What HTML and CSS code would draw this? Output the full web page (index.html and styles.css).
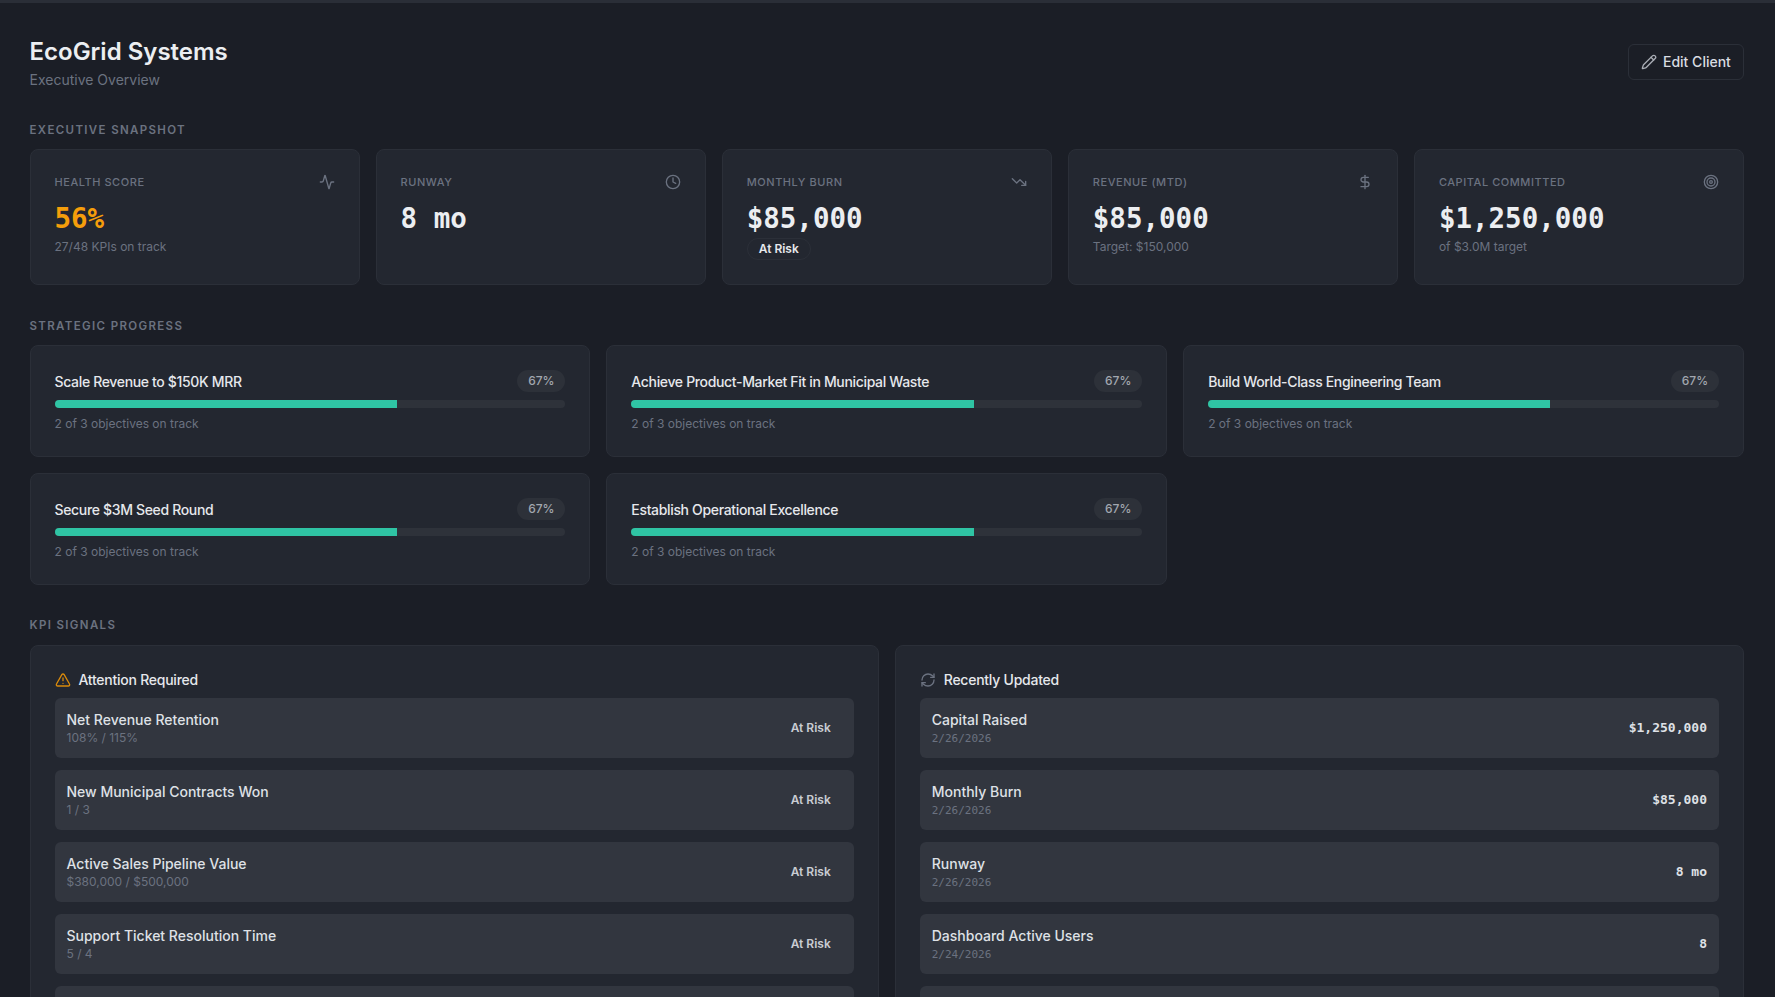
FILE: index.html
```html
<!DOCTYPE html>
<html lang="en">
<head>
<meta charset="utf-8">
<title>EcoGrid Systems</title>
<link rel="stylesheet" href="styles.css">
</head>
<body>
<main class="page">
  <header class="header">
    <div>
      <h1 class="title">EcoGrid Systems</h1>
      <p class="subtitle">Executive Overview</p>
    </div>
    <button class="edit-btn" type="button">
      <svg class="icon icon-edit" viewBox="0 0 24 24"><path d="M21.174 6.812a1 1 0 0 0-3.986-3.987L3.842 16.174a2 2 0 0 0-.5.83l-1.321 4.352a.5.5 0 0 0 .623.622l4.353-1.32a2 2 0 0 0 .83-.497z"/><path d="m15 5 4 4"/></svg>
      Edit Client
    </button>
  </header>

  <section class="section">
    <h2 class="section-label">EXECUTIVE SNAPSHOT</h2>
    <div class="snapshot-grid">
      <article class="card stat">
        <div class="stat-head"><span class="stat-label">HEALTH SCORE</span>
          <svg class="icon" viewBox="0 0 24 24"><path d="M22 12h-2.48a2 2 0 0 0-1.93 1.46l-2.35 8.36a.25.25 0 0 1-.48 0L9.24 2.18a.25.25 0 0 0-.48 0l-2.35 8.36A2 2 0 0 1 4.49 12H2"/></svg></div>
        <div class="stat-value warn">56%</div>
        <div class="stat-sub">27/48 KPIs on track</div>
      </article>
      <article class="card stat">
        <div class="stat-head"><span class="stat-label">RUNWAY</span>
          <svg class="icon" viewBox="0 0 24 24"><circle cx="12" cy="12" r="10"/><polyline points="12 6 12 12 16 14"/></svg></div>
        <div class="stat-value">8 mo</div>
      </article>
      <article class="card stat">
        <div class="stat-head"><span class="stat-label">MONTHLY BURN</span>
          <svg class="icon" viewBox="0 0 24 24"><polyline points="22 17 13.5 8.5 8.5 13.5 2 7"/><polyline points="16 17 22 17 22 11"/></svg></div>
        <div class="stat-value">$85,000</div>
        <span class="badge">At Risk</span>
      </article>
      <article class="card stat">
        <div class="stat-head"><span class="stat-label">REVENUE (MTD)</span>
          <svg class="icon" viewBox="0 0 24 24"><line x1="12" x2="12" y1="2" y2="22"/><path d="M17 5H9.5a3.5 3.5 0 0 0 0 7h5a3.5 3.5 0 0 1 0 7H6"/></svg></div>
        <div class="stat-value">$85,000</div>
        <div class="stat-sub">Target: $150,000</div>
      </article>
      <article class="card stat">
        <div class="stat-head"><span class="stat-label">CAPITAL COMMITTED</span>
          <svg class="icon" viewBox="0 0 24 24"><circle cx="12" cy="12" r="10"/><circle cx="12" cy="12" r="6"/><circle cx="12" cy="12" r="2"/></svg></div>
        <div class="stat-value">$1,250,000</div>
        <div class="stat-sub">of $3.0M target</div>
      </article>
    </div>
  </section>

  <section class="section">
    <h2 class="section-label">STRATEGIC PROGRESS</h2>
    <div class="goal-grid">
      <article class="card goal">
        <div class="goal-head"><span class="goal-title">Scale Revenue to $150K MRR</span><span class="pill">67%</span></div>
        <div class="track"><div class="fill"></div></div>
        <div class="goal-sub">2 of 3 objectives on track</div>
      </article>
      <article class="card goal">
        <div class="goal-head"><span class="goal-title">Achieve Product-Market Fit in Municipal Waste</span><span class="pill">67%</span></div>
        <div class="track"><div class="fill"></div></div>
        <div class="goal-sub">2 of 3 objectives on track</div>
      </article>
      <article class="card goal">
        <div class="goal-head"><span class="goal-title">Build World-Class Engineering Team</span><span class="pill">67%</span></div>
        <div class="track"><div class="fill"></div></div>
        <div class="goal-sub">2 of 3 objectives on track</div>
      </article>
      <article class="card goal">
        <div class="goal-head"><span class="goal-title">Secure $3M Seed Round</span><span class="pill">67%</span></div>
        <div class="track"><div class="fill"></div></div>
        <div class="goal-sub">2 of 3 objectives on track</div>
      </article>
      <article class="card goal">
        <div class="goal-head"><span class="goal-title">Establish Operational Excellence</span><span class="pill">67%</span></div>
        <div class="track"><div class="fill"></div></div>
        <div class="goal-sub">2 of 3 objectives on track</div>
      </article>
    </div>
  </section>

  <section class="section">
    <h2 class="section-label section-label-kpi">KPI SIGNALS</h2>
    <div class="kpi-grid">
      <article class="card panel">
        <h3 class="panel-title">
          <svg class="icon icon-warn" viewBox="0 0 24 24"><path d="m21.73 18-8-14a2 2 0 0 0-3.48 0l-8 14A2 2 0 0 0 4 21h16a2 2 0 0 0 1.73-3"/><path d="M12 9v4"/><path d="M12 17h.01"/></svg>
          Attention Required
        </h3>
        <div class="rows">
          <div class="row"><div><div class="row-name">Net Revenue Retention</div><div class="row-sub">108% / 115%</div></div><span class="row-status">At Risk</span></div>
          <div class="row"><div><div class="row-name">New Municipal Contracts Won</div><div class="row-sub">1 / 3</div></div><span class="row-status">At Risk</span></div>
          <div class="row"><div><div class="row-name">Active Sales Pipeline Value</div><div class="row-sub">$380,000 / $500,000</div></div><span class="row-status">At Risk</span></div>
          <div class="row"><div><div class="row-name">Support Ticket Resolution Time</div><div class="row-sub">5 / 4</div></div><span class="row-status">At Risk</span></div>
          <div class="row"></div>
        </div>
      </article>
      <article class="card panel">
        <h3 class="panel-title">
          <svg class="icon" viewBox="0 0 24 24"><path d="M3 12a9 9 0 0 1 9-9 9.75 9.75 0 0 1 6.74 2.74L21 8"/><path d="M21 3v5h-5"/><path d="M21 12a9 9 0 0 1-9 9 9.75 9.75 0 0 1-6.74-2.74L3 16"/><path d="M8 16H3v5"/></svg>
          Recently Updated
        </h3>
        <div class="rows">
          <div class="row"><div><div class="row-name">Capital Raised</div><div class="row-date">2/26/2026</div></div><span class="row-value">$1,250,000</span></div>
          <div class="row"><div><div class="row-name">Monthly Burn</div><div class="row-date">2/26/2026</div></div><span class="row-value">$85,000</span></div>
          <div class="row"><div><div class="row-name">Runway</div><div class="row-date">2/26/2026</div></div><span class="row-value">8 mo</span></div>
          <div class="row"><div><div class="row-name">Dashboard Active Users</div><div class="row-date">2/24/2026</div></div><span class="row-value">8</span></div>
          <div class="row"></div>
        </div>
      </article>
    </div>
  </section>
</main>
</body>
</html>
```
FILE: styles.css
```css
* { box-sizing: border-box; }
html, body { height: 100%; }
body {
  margin: 0;
  height: 997px;
  overflow: hidden;
  background: #1b1e26;
  border-top: 3px solid #2a2e37;
  color: #e6e8ec;
  font-family: Inter, "Liberation Sans", sans-serif;
}
.page { padding: 33px 31px 24px 29.5px; }
.header { display: flex; justify-content: space-between; align-items: flex-start; margin-bottom: 30px; }
.title { margin: 0; font-size: 24px; line-height: 32px; font-weight: 600; color: #eceef1; }
.subtitle { margin: 1px 0 0; font-size: 14px; line-height: 22px; color: #6b7280; }
.edit-btn {
  display: flex; align-items: center; gap: 6px;
  height: 36px; width: 116px; margin-top: 8px; padding: 0 12px;
  background: transparent; border: 1px solid #2b2f38; border-radius: 6px;
  color: #d9dce1; font: 500 14px/20px Inter, sans-serif;
}
.section { margin-bottom: 32px; }
.section-label { margin: 0 0 11px; padding-top: 1px; font-size: 11.5px; line-height: 16px; font-weight: 600; letter-spacing: 1.35px; color: #6b7280; }
.section-label-kpi { margin-bottom: 12px; padding-top: 0; }
.snapshot-grid { display: grid; grid-template-columns: repeat(5, 1fr); gap: 16px; }
.goal-grid { display: grid; grid-template-columns: repeat(3, 1fr); gap: 16px; }
.kpi-grid { display: grid; grid-template-columns: repeat(2, 1fr); gap: 16px; }
.card { background: #232730; border: 1px solid #2b2f38; border-radius: 8px; padding: 24px; }
.icon { width: 16px; height: 16px; flex: none; fill: none; stroke: #6b7280; stroke-width: 2; stroke-linecap: round; stroke-linejoin: round; }
.icon-edit { stroke: #a9adb5; }
.icon-warn { stroke: #d98a0b; }
.stat { height: 136px; }
.stat-head { display: flex; justify-content: space-between; align-items: center; height: 16px; margin-bottom: 8px; }
.stat-label { font-size: 11px; line-height: 16px; font-weight: 500; letter-spacing: 0.05em; color: #6b7280; }
.stat-value { font: 700 27.5px/40px "DejaVu Sans Mono", monospace; color: #eceef1; }
.warn { color: #f59e0b; }
.stat-sub { font-size: 12px; line-height: 16px; margin-top: 1px; color: #6b7280; }
.badge {
  display: block; width: fit-content; height: 22px; margin-top: 0; padding: 0 11px;
  border: 1px solid #2b2f38; border-radius: 11px;
  font-size: 12px; line-height: 20px; font-weight: 600; color: #e6e8ec;
}
.goal-head { display: flex; justify-content: space-between; align-items: center; height: 22px; margin-bottom: 8px; }
.goal-title { font-size: 14px; font-weight: 500; letter-spacing: -0.34px; color: #e6e8ec; }
.pill { height: 22px; width: 48px; text-align: center; border-radius: 11px; background: #2d3139; font-size: 12px; line-height: 22px; font-weight: 500; color: #a2a7af; }
.track { height: 8px; border-radius: 4px; background: #2e323a; overflow: hidden; }
.fill { height: 100%; width: 67%; background: #2fc4a4; }
.goal-sub { margin-top: 8px; font-size: 12px; line-height: 16px; color: #6b7280; }
.panel { height: 420px; overflow: hidden; }
.panel-title { display: flex; align-items: center; gap: 8px; margin: 0 0 8px; font-size: 14px; line-height: 20px; font-weight: 500; letter-spacing: -0.25px; color: #e6e8ec; }
.rows { display: flex; flex-direction: column; gap: 12px; }
.row { display: flex; justify-content: space-between; align-items: center; height: 60px; flex: none; padding: 0 12px; border-radius: 6px; background: #32363f; }
.row-name { font-size: 14px; line-height: 20px; font-weight: 500; color: #dfe1e6; }
.row-sub { font-size: 12px; line-height: 16px; color: #6b7280; }
.row-date { margin: 1px 0 -1px; font: 11px/16px "DejaVu Sans Mono", monospace; color: #6b7280; }
.row-status { padding: 0 11px 2px 0; font-size: 12px; font-weight: 600; color: #c9ccd2; }
.row-value { font: 700 13px/16px "DejaVu Sans Mono", monospace; color: #dfe1e6; }
```
